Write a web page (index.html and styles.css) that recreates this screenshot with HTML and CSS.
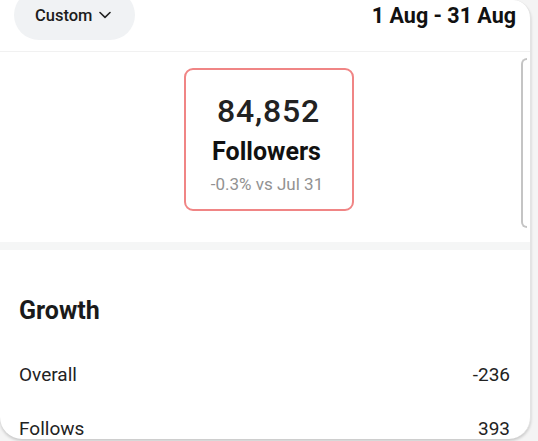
FILE: index.html
```html
<!DOCTYPE html>
<html>
<head>
<meta charset="utf-8">
<link rel="stylesheet" href="styles.css">
</head>
<body>
<div class="screen">
  <div class="header">
    <div class="pill">
      <span>Custom</span>
      <svg class="chev" width="12" height="8" viewBox="0 0 12 8"><path d="M1 1.5 L6 6.3 L11 1.5" fill="none" stroke="#222" stroke-width="1.6" stroke-linecap="round" stroke-linejoin="round"/></svg>
    </div>
    <div class="range">1 Aug - 31 Aug</div>
  </div>
  <div class="summary">
    <div class="stat">
      <div class="num">84,852</div>
      <div class="label">Followers</div>
      <div class="delta">-0.3% vs Jul 31</div>
    </div>
    <div class="scroller"></div>
  </div>
  <div class="sep"></div>
  <div class="growth">
    <div class="title">Growth</div>
    <div class="row"><span>Overall</span><span>-236</span></div>
    <div class="row"><span>Follows</span><span>393</span></div>
  </div>
</div>
</body>
</html>
```
FILE: styles.css
```css
* { box-sizing: border-box; }
html, body { margin: 0; padding: 0; }
body {
  width: 538px;
  height: 441px;
  overflow: hidden;
  background: #f4f4f4;
  font-family: Roboto, "Liberation Sans", sans-serif;
  color: #1f1f1f;
}
.screen {
  width: 531px;
  height: 439px;
  background: #fff;
  border-right: 1px solid #e3e3e3;
  border-radius: 0 18px 22px 22px;
  box-shadow: 0 2px 3px rgba(0,0,0,0.18);
  overflow: hidden;
}
.header {
  height: 52px;
  display: flex;
  justify-content: space-between;
  align-items: flex-start;
  padding: 0 14px 0 14px;
  border-bottom: 1px solid #f1f1f1;
}
.pill {
  height: 50px;
  margin-top: -10px;
  width: 121px;
  background: #f0f2f4;
  border-radius: 25px;
  display: flex;
  align-items: center;
  padding-left: 21px;
  padding-top: 1px;
  font-size: 16.5px;
  font-weight: 500;
  color: #1c1c1c;
}
.chev { margin-left: 7px; margin-top: -2px; }
.range {
  margin-top: 3px;
  font-size: 21.5px;
  font-weight: 700;
  color: #111;
}
.summary {
  position: relative;
  height: 190px;
  display: flex;
  justify-content: center;
  padding-top: 16px;
}
.stat {
  width: 170px;
  height: 143px;
  margin-left: 7px;
  border: 2px solid #f08585;
  border-radius: 9px;
  display: flex;
  flex-direction: column;
  align-items: center;
  padding-top: 22px;
}
.num {
  font-size: 32px;
  font-weight: 500;
  letter-spacing: 0.8px;
  line-height: 38px;
  color: #222;
}
.label {
  margin-top: 7px;
  margin-right: 4px;
  font-size: 25px;
  font-weight: 700;
  line-height: 30px;
  color: #111;
}
.delta {
  margin-top: 6px;
  margin-right: 3px;
  font-size: 17px;
  line-height: 22px;
  color: #929292;
}
.scroller {
  position: absolute;
  right: 3px;
  top: 6px;
  width: 6px;
  height: 170px;
  border: 2px solid #c4c4c4;
  border-right: none;
  border-radius: 6px 0 0 6px;
}
.sep {
  height: 8px;
  background: #f5f6f6;
}
.growth {
  padding: 46px 20px 0 19px;
}
.title {
  font-size: 25px;
  font-weight: 700;
  line-height: 30px;
  color: #1a1a1a;
}
.row {
  display: flex;
  justify-content: space-between;
  font-size: 19px;
  color: #222;
  line-height: 24px;
  margin-top: 30px;
}
.row + .row { margin-top: 30px; }
.growth .title + .row { margin-top: 37px; }
```
